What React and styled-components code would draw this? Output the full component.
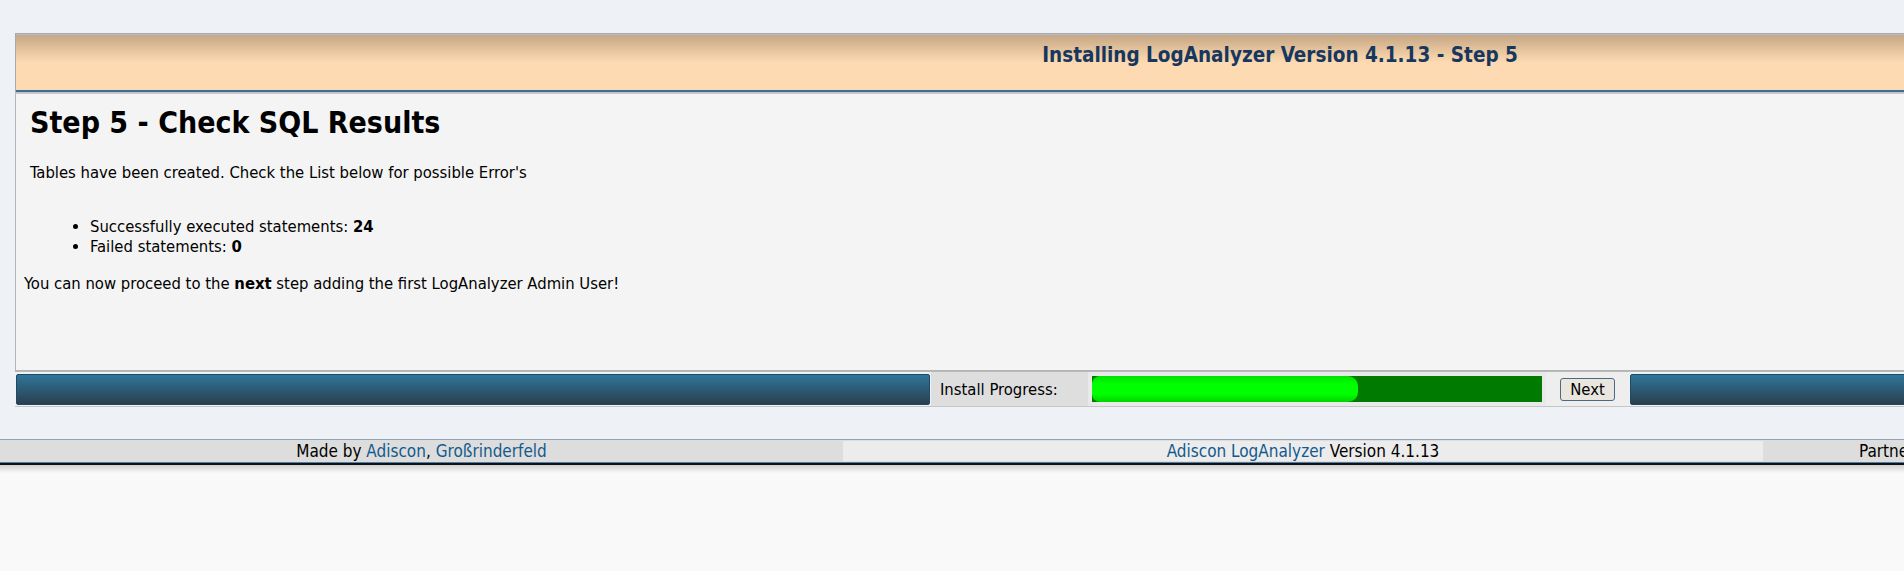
import React from 'react';
import styled, { createGlobalStyle } from 'styled-components';

const navy = '#17375e';
const linkBlue = '#135a8c';
const progress = 59;

const GlobalStyle = createGlobalStyle`
	html, body {
		margin: 0;
		padding: 0;
		background: #f9f9f9;
		overflow-x: hidden;
	}
	body {
		font-family: "DejaVu Sans Condensed", "DejaVu Sans", sans-serif;
		font-size: 16.5px;
		color: #000;
	}
`;

const results = [
	{ label: 'Successfully executed statements:', value: 24 },
	{ label: 'Failed statements:', value: 0 },
];

const App = () => (
	<>
		<GlobalStyle />
		<Page>
			<Frame>
				<Header>
					<HeaderTitle>Installing LogAnalyzer Version 4.1.13 - Step 5</HeaderTitle>
				</Header>
				<Content>
					<Intro>
						<Title>Step 5 - Check SQL Results</Title>
						<Text $gap={22}>Tables have been created. Check the List below for possible Error's</Text>
						<Results>
							{results.map(r => (
								<li key={r.label}>{r.label} <b>{r.value}</b></li>
							))}
						</Results>
					</Intro>
					<Text $gap={17}>You can now proceed to the <b>next</b> step adding the first LogAnalyzer Admin User!</Text>
				</Content>
				<ProgressRow>
					<BlueCap />
					<LabelCell>Install Progress:</LabelCell>
					<BarCell>
						<Bar>
							<Fill style={{ width: `${progress}%` }} />
						</Bar>
					</BarCell>
					<ButtonCell>
						<NextButton type="button">Next</NextButton>
					</ButtonCell>
					<BlueCap />
				</ProgressRow>
			</Frame>
			<Footer>
				<FooterCell>Made by <Link href="#">Adiscon</Link>, <Link href="#">Großrinderfeld</Link></FooterCell>
				<FooterCell $light><Link href="#">Adiscon LogAnalyzer</Link> Version 4.1.13</FooterCell>
				<PartnerCell>Partners: <Link href="#">Rsyslog</Link> | <Link href="#">WinSyslog</Link></PartnerCell>
			</Footer>
			<FooterShade />
		</Page>
	</>
);

const Page = styled.div`
	width: 2560px;
	min-height: 571px;
	background: #f9f9f9;
`;

const Frame = styled.div`
	background: #eef1f6;
	padding: 33px 15px 32px;
`;

const Header = styled.div`
	border: 1px solid #a9a9a9;
	border-bottom: 1px solid #c4c4c4;
`;

const HeaderTitle = styled.div`
	height: 58px;
	padding-top: 8px;
	box-sizing: border-box;
	border-top: 1px solid #b5bfcc;
	border-bottom: 2px solid #3b6a9c;
	background: linear-gradient(to bottom, #c6a684 0%, #e8c7a0 30%, #fddab1 50%, #fddab1 100%);
	color: ${navy};
	font-weight: bold;
	font-size: 20.5px;
	line-height: 24px;
	text-align: center;
`;

const Content = styled.div`
	height: 276px;
	border: 1px solid #b4b4b4;
	border-top-color: #c8c8c8;
	background: #f4f4f4;
	padding: 0 8px;
`;

const Intro = styled.div`
	padding: 0 6px;
`;

const Title = styled.h1`
	margin: 11px 0 0;
	font-size: 30px;
	font-weight: bold;
	line-height: 36px;
`;

const Text = styled.p`
	margin: ${props => props.$gap}px 0 0;
	line-height: 20px;
`;

const Results = styled.ul`
	margin: 34px 0 0;
	padding-left: 60px;
	line-height: 20px;
`;

const ProgressRow = styled.div`
	display: grid;
	grid-template-columns: 1fr 157px 458px 83px 1fr;
	height: 34px;
	border-top: 1px solid #b9b9b9;
	border-bottom: 1px solid #c6c6c6;
	background: #eef1f6;
`;

const BlueCap = styled.div`
	margin: 2px 1px 1px 1px;
	border: 1px solid #1e4a66;
	border-radius: 2px;
	background: linear-gradient(to bottom, #2f7599 0%, #2d5a76 50%, #2b3f4e 100%);
`;

const LabelCell = styled.div`
	display: flex;
	align-items: center;
	padding-left: 9px;
	background: #dedede;
	white-space: nowrap;
`;

const BarCell = styled.div`
	display: flex;
	align-items: center;
	padding: 0 4px;
	background: #e9e9e9;
`;

const Bar = styled.div`
	width: 100%;
	height: 26px;
	background: #007a00;
	display: flex;
`;

const Fill = styled.div`
	height: 100%;
	border-radius: 8px 10px 10px 8px;
	background: linear-gradient(to bottom, #00e000 0%, #00ff00 30%, #00ff00 70%, #00d400 100%);
`;

const ButtonCell = styled.div`
	display: flex;
	align-items: center;
	justify-content: center;
	background: #eeeeee;
`;

const NextButton = styled.button`
	font-family: inherit;
	font-size: 16.5px;
	height: 23px;
	padding: 0 9px;
	background: #e9e6e0;
	border: 1px solid #4d6884;
	border-radius: 3px;
	color: #000;
`;

const Footer = styled.div`
	display: grid;
	grid-template-columns: 843px 920px 1fr;
	height: 22px;
	border-top: 1px solid #93a3b6;
	border-bottom: 1px solid #4f7ea8;
	background: #dddddd;
	font-size: 17px;
	line-height: 22px;
`;

const FooterCell = styled.div`
	text-align: center;
	white-space: nowrap;
	background: ${props => (props.$light ? '#ececec' : 'transparent')};
	margin: ${props => (props.$light ? '1px 0' : '0')};
	line-height: ${props => (props.$light ? '20px' : '22px')};
`;

const PartnerCell = styled.div`
	padding-left: 96px;
	white-space: nowrap;
`;

const Link = styled.a`
	color: ${linkBlue};
	text-decoration: none;
`;

const FooterShade = styled.div`
	height: 8px;
	border-top: 2px solid #111;
	background: linear-gradient(to bottom, #d0d0d0, #f9f9f9);
`;

export default App;
